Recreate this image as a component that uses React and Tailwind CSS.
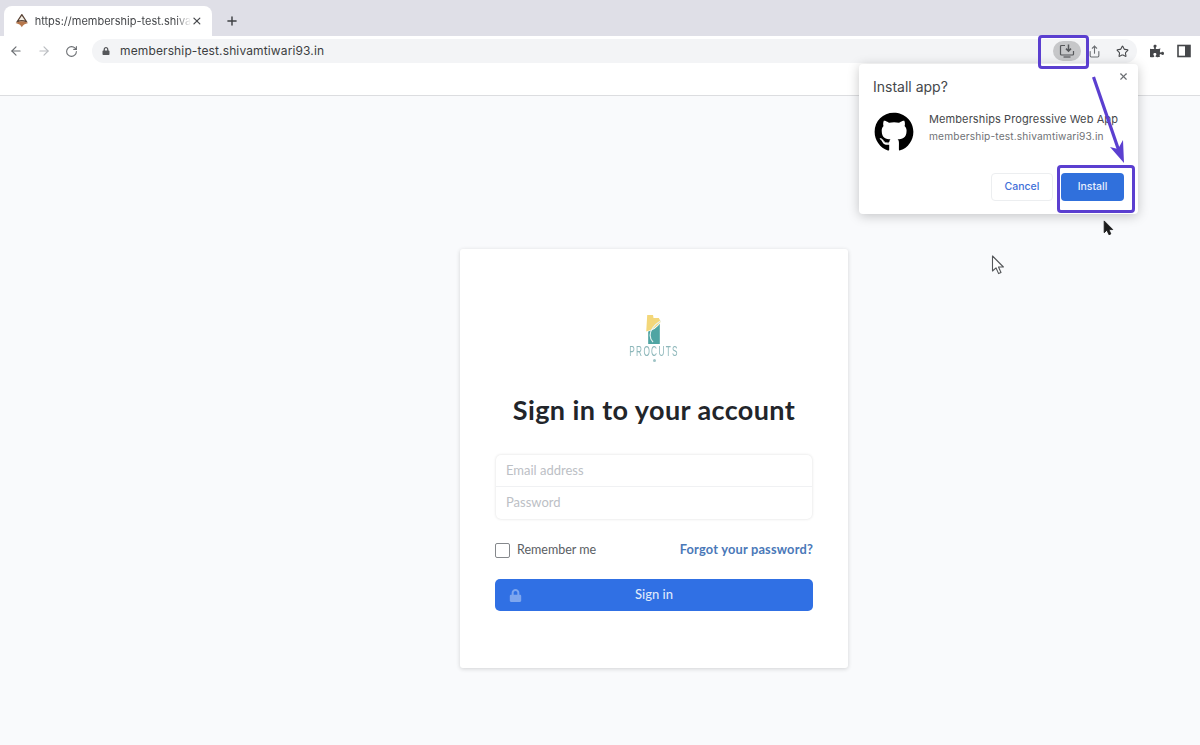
import { ArrowLeft, ArrowRight, RotateCw, Plus, X, Star, Share } from 'lucide-react'
import { FaGithub, FaLock, FaPuzzlePiece } from 'react-icons/fa'

const Favicon = () => (
  <svg width="16" height="16" viewBox="0 0 16 16" fill="none">
    <path d="M8 1.5 L13 9 Q8 6.5 3 9 Z" fill="#f4efe6" stroke="#5a4436" strokeWidth="1.3" strokeLinejoin="round" />
    <path d="M1.5 10 Q8 6.5 14.5 10 Q9.5 11 8 14.5 Q6.5 11 1.5 10 Z" fill="#b7774b" />
  </svg>
)

const InstallIcon = () => (
  <svg width="16" height="16" viewBox="0 0 16 16" fill="none" stroke="#55575a" strokeWidth="1.2">
    <path d="M6 2.5 H2.5 A1 1 0 0 0 1.5 3.5 V11 A1 1 0 0 0 2.5 12 H13.5 A1 1 0 0 0 14.5 11 V8" />
    <path d="M9.5 1.5 V8 M7 5.6 L9.5 8.1 L12 5.6" strokeWidth="1.5" />
    <path d="M4.5 14 H11.5" />
  </svg>
)

const SidePanelIcon = () => (
  <svg width="14" height="14" viewBox="0 0 14 14" fill="none">
    <rect x="1" y="1.5" width="12" height="11" stroke="#45474a" strokeWidth="1.6" />
    <rect x="8" y="1.5" width="5" height="11" fill="#45474a" />
  </svg>
)

const Logo = () => (
  <div className="flex h-[47px] flex-col items-center">
    <svg width="22" height="30" viewBox="0 0 20 30">
      <path d="M3 0 H9 L9.5 3 H15 L17 7 Q11 15 2 17 Z" fill="#f3d77a" />
      <path d="M4 17 Q12 15 16 9 V30 H4 Z" fill="#4fa5a3" />
      <path d="M17 6 Q6 13 6 21 Q6 25 9 28" fill="none" stroke="#e6f2f1" strokeWidth="1.2" />
    </svg>
    <span className="h-[13px] font-['Liberation_Sans',sans-serif] text-[15px] leading-[13px] tracking-[2.4px] whitespace-nowrap text-[#8db7ba] [transform:scaleX(0.55)]">PROCUTS</span>
    <div className="mt-[2px] h-[3px] w-[3px] rounded-full bg-[#9fc4c6]" />
  </div>
)

const Cursor = ({ className, fill, stroke, width, height }) => (
  <svg className={className} width={width} height={height} viewBox="0 0 14 20">
    <path d="M1.5 1 V16 L5 12.8 L7.6 18.6 L10 17.5 L7.5 12 H12.4 Z" fill={fill} stroke={stroke} strokeWidth="1.1" strokeLinejoin="round" />
  </svg>
)

const InstallPopup = () => (
  <div className="absolute left-[859px] top-[64px] h-[150px] w-[279px] rounded-[4px] bg-white shadow-[0_2px_12px_rgba(0,0,0,0.22)]">
    <X className="absolute right-[9px] top-[7px] text-[#6b6e72]" size={11} strokeWidth={2.5} />
    <div className="pl-[14px] pt-[14px] text-[14px] leading-[18px] text-[#45474a]">Install app?</div>
    <div className="mt-[16px] flex items-start pl-[15px]">
      <FaGithub size={40} className="text-black" />
      <div className="ml-[15px]">
        <div className="text-[11px] leading-[15px] tracking-[0.1px] whitespace-nowrap text-[#45474a]">Memberships Progressive Web App</div>
        <div className="mt-[2px] text-[10.2px] leading-[14px] tracking-[0.15px] text-[#6f7276]">membership-test.shivamtiwari93.in</div>
      </div>
    </div>
    <div className="absolute left-[132px] top-[109px] flex gap-2">
      <div className="flex h-[28px] w-[62px] items-center justify-center rounded-[4px] border border-[#eceef0] text-[10.5px] font-medium text-[#3f6fd8]">Cancel</div>
      <div className="flex h-[28px] w-[63px] items-center justify-center rounded-[4px] bg-[#3070dc] text-[10.5px] font-medium text-[#e8effc]">Install</div>
    </div>
  </div>
)

const Annotations = () => (
  <>
    <div className="absolute left-[1038px] top-[35px] h-[34px] w-[51px] rounded-[4px] border-[3px] border-[#5b3fd0]" />
    <div className="absolute left-[1057px] top-[165px] h-[48px] w-[78px] rounded-[4px] border-[3px] border-[#5b3fd0]" />
    <svg className="pointer-events-none absolute left-[1085px] top-[70px]" width="50" height="100" viewBox="0 0 50 100">
      <path d="M8.5 7 L35 84" stroke="#5b3fd0" strokeWidth="3.2" />
      <path d="M39 93 L25 77 L33 79 L38 70 Z" fill="#5b3fd0" />
    </svg>
    <Cursor className="absolute left-[1103px] top-[220px]" fill="#1c1c1c" stroke="#1c1c1c" width={11} height={16} />
    <Cursor className="absolute left-[991px] top-[255px]" fill="#ffffff" stroke="#55575a" width={14} height={20} />
  </>
)

export default function App() {
  return (
    <div className="relative h-[745px] w-[1200px] overflow-hidden bg-[#f9fafc] font-['Inter','Liberation_Sans',sans-serif]">
      {/* tab strip */}
      <div className="flex h-[36px] items-end bg-[#dfdfe7] pl-[4px]">
        <div className="flex h-[30px] w-[208px] items-center rounded-t-[8px] bg-white pl-[10px] pr-[9px]">
          <Favicon />
          <span className="ml-[5px] text-[11px] whitespace-nowrap text-[#45474a] [mask-image:linear-gradient(to_right,#000_90%,transparent)]">https://membership-test.shiva</span>
          <X className="ml-auto text-[#45474a]" size={12} strokeWidth={2.5} />
        </div>
        <Plus className="mb-[8px] ml-[13px] text-[#3f4144]" size={14} strokeWidth={2.5} />
      </div>

      {/* toolbar */}
      <div className="flex h-[30px] items-center bg-white pl-[9px]">
        <ArrowLeft className="text-[#6b6e72]" size={14} strokeWidth={2} />
        <ArrowRight className="ml-[14px] text-[#b9bcc0]" size={14} strokeWidth={2} />
        <RotateCw className="ml-[14px] text-[#6b6e72]" size={13} strokeWidth={2} />
        <div className="ml-[14px] flex h-[24px] w-[1045px] items-center rounded-full bg-[#f3f4f6] pl-[10px]">
          <FaLock className="text-[#55575a]" size={8} />
          <span className="ml-[10px] text-[12px] tracking-[0.13px] text-[#3c3e41]">membership-test.shivamtiwari93.in</span>
          <div className="ml-auto flex items-center">
            <div className="flex h-[20px] w-[28px] items-center justify-center rounded-full bg-[#c6c7c9]">
              <InstallIcon />
            </div>
            <Share className="ml-[7px] text-[#6b6e72]" size={13} strokeWidth={2} />
            <Star className="ml-[15px] mr-[8px] text-[#45474a]" size={13} strokeWidth={2} />
          </div>
        </div>
        <FaPuzzlePiece className="ml-[13px] text-[#45474a]" size={14} />
        <div className="ml-[13px]">
          <SidePanelIcon />
        </div>
      </div>

      {/* empty page header */}
      <div className="h-[30px] border-b border-[#dcdde0] bg-white" />

      {/* page */}
      <div className="pl-[460px] pt-[153px]">
        <div className="h-[419px] w-[388px] rounded-[3px] bg-white px-[35px] pt-[66px] font-['Lato',sans-serif] shadow-[0_1px_4px_rgba(0,0,0,0.16)]">
          <Logo />
          <h1 className="mt-[30px] text-center text-[27px] leading-[36px] font-bold tracking-[0.4px] text-[#22252a]">Sign in to your account</h1>
          <div className="mx-px mt-[27px] rounded-[5px] shadow-[0_0_3px_rgba(0,0,0,0.14)]">
            <div className="flex h-[32px] items-center border-b border-[#f0f1f3] px-[10px] text-[13px] text-[#bcc0c5]">Email address</div>
            <div className="flex h-[32px] items-center px-[10px] text-[13px] text-[#bcc0c5]">Password</div>
          </div>
          <div className="mt-[21px] flex h-[20px] items-center justify-between">
            <label className="flex items-center text-[12.5px] text-[#5a5e64]">
              <span className="h-[15px] w-[15px] rounded-[2px] border border-[#85888c] bg-white" />
              <span className="ml-[7px]">Remember me</span>
            </label>
            <span className="text-[12.8px] font-bold tracking-[0.2px] text-[#4a78b8]">Forgot your password?</span>
          </div>
          <div className="relative mt-[19px] flex h-[32px] items-center justify-center rounded-[5px] bg-[#3070e4] text-[13px] font-medium text-[#dfe9fb]">
            <FaLock className="absolute left-[14px] text-[#7ea6ee]" size={13} />
            Sign in
          </div>
        </div>
      </div>

      <InstallPopup />
      <Annotations />
    </div>
  )
}
